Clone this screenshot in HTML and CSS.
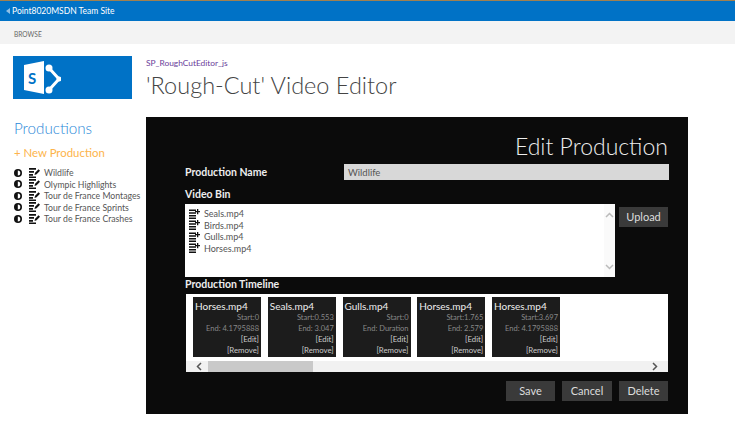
FILE: index.html
```html
<!DOCTYPE html>
<html lang="en">
<head>
    <meta charset="UTF-8">
    <title>Rough-Cut Video Editor</title>
    <link rel="stylesheet" href="styles.css">
</head>
<body>
    <svg class="defs" width="0" height="0">
        <symbol id="editIcon" viewBox="0 0 11 10">
            <path d="M0 0h7v1.700H0zM0 3h5v1.700H0zM0 6h4v1.700H0zM0 8.400h7V10H0z" fill="#111"/>
            <path d="M5.500 7l.6-2.200L9.500 1.200l1.500 1.500L7.600 6.300z" fill="#111"/>
        </symbol>
        <symbol id="addIcon" viewBox="0 0 11 10">
            <path d="M0 .5h7v1.500H0zM0 3.300h7v1.500H0zM0 6h7v1.500H0zM0 8.500h7V10H0z" fill="#111"/>
            <path d="M8 0h1.300v2H11v1.300H9.300v2H8v-2H6V2h2z" fill="#111"/>
        </symbol>
        <symbol id="playIcon" viewBox="0 0 8 8">
            <circle cx="4" cy="4" r="4" fill="#111"/>
            <path d="M3.800 1.500A2.500 2.500 0 0 1 3.800 6.500z" fill="#fff"/>
        </symbol>
    </svg>

    <div class="suite-bar">
        <span class="back-arrow"></span>
        <span>Point8020MSDN Team Site</span>
    </div>
    <div class="ribbon">BROWSE</div>

    <div class="title-row">
        <div class="logo">
            <svg width="37" height="33" viewBox="0 0 37 33">
                <path d="M0 4L20 0v33L0 29z" fill="#fff"/>
                <path d="M25 7L35 18 25 29" fill="none" stroke="#fff" stroke-width="3"/>
                <circle cx="25" cy="7" r="3.500" fill="#fff"/>
                <circle cx="35" cy="18" r="2.500" fill="#fff"/>
                <circle cx="25" cy="29" r="3.500" fill="#fff"/>
                <text x="4" y="23" class="logo-s">S</text>
            </svg>
        </div>
        <div class="title-text">
            <a class="crumb">SP_RoughCutEditor_js</a>
            <div class="page-title">'Rough-Cut' Video Editor</div>
        </div>
    </div>

    <div class="main">
        <div class="side">
            <div class="side-title">Productions</div>
            <div class="new-link">+ New Production</div>
            <ul class="prod-list">
                <li><svg class="play"><use href="#playIcon"/></svg><svg class="icon"><use href="#editIcon"/></svg>Wildlife</li>
                <li><svg class="play"><use href="#playIcon"/></svg><svg class="icon"><use href="#editIcon"/></svg>Olympic Highlights</li>
                <li><svg class="play"><use href="#playIcon"/></svg><svg class="icon"><use href="#editIcon"/></svg>Tour de France Montages</li>
                <li><svg class="play"><use href="#playIcon"/></svg><svg class="icon"><use href="#editIcon"/></svg>Tour de France Sprints</li>
                <li><svg class="play"><use href="#playIcon"/></svg><svg class="icon"><use href="#editIcon"/></svg>Tour de France Crashes</li>
            </ul>
        </div>

        <div class="panel">
            <div class="panel-title">Edit Production</div>
            <div class="name-row">
                <div class="label">Production Name</div>
                <div class="name-input">Wildlife</div>
            </div>
            <div class="label bin-label">Video Bin</div>
            <div class="bin-row">
                <div class="bin">
                    <ul class="bin-list">
                        <li><svg class="icon"><use href="#addIcon"/></svg>Seals.mp4</li>
                        <li><svg class="icon"><use href="#addIcon"/></svg>Birds.mp4</li>
                        <li><svg class="icon"><use href="#addIcon"/></svg>Gulls.mp4</li>
                        <li><svg class="icon"><use href="#addIcon"/></svg>Horses.mp4</li>
                    </ul>
                    <div class="vscroll">
                        <svg width="9" height="6" viewBox="0 0 9 6"><path d="M1 5l3.500-3.500L8 5" fill="none" stroke="#bbb" stroke-width="1.500"/></svg>
                        <svg width="9" height="6" viewBox="0 0 9 6"><path d="M1 1l3.500 3.500L8 1" fill="none" stroke="#bbb" stroke-width="1.500"/></svg>
                    </div>
                </div>
                <div class="btn upload">Upload</div>
            </div>
            <div class="label timeline-label">Production Timeline</div>
            <div class="timeline">
                <div class="clips">
                    <div class="clip">
                        <div class="clip-name">Horses.mp4</div>
                        <div class="clip-time">Start:0</div>
                        <div class="clip-time">End: 4.1795888</div>
                        <div class="clip-link">[Edit]</div>
                        <div class="clip-link">[Remove]</div>
                    </div>
                    <div class="clip">
                        <div class="clip-name">Seals.mp4</div>
                        <div class="clip-time">Start:0.553</div>
                        <div class="clip-time">End: 3.047</div>
                        <div class="clip-link">[Edit]</div>
                        <div class="clip-link">[Remove]</div>
                    </div>
                    <div class="clip">
                        <div class="clip-name">Gulls.mp4</div>
                        <div class="clip-time">Start:0</div>
                        <div class="clip-time">End: Duration</div>
                        <div class="clip-link">[Edit]</div>
                        <div class="clip-link">[Remove]</div>
                    </div>
                    <div class="clip">
                        <div class="clip-name">Horses.mp4</div>
                        <div class="clip-time">Start:1.765</div>
                        <div class="clip-time">End: 2.579</div>
                        <div class="clip-link">[Edit]</div>
                        <div class="clip-link">[Remove]</div>
                    </div>
                    <div class="clip">
                        <div class="clip-name">Horses.mp4</div>
                        <div class="clip-time">Start:3.697</div>
                        <div class="clip-time">End: 4.1795888</div>
                        <div class="clip-link">[Edit]</div>
                        <div class="clip-link">[Remove]</div>
                    </div>
                </div>
                <div class="hscroll">
                    <svg width="6" height="9" viewBox="0 0 6 9"><path d="M5 1L1.500 4.500 5 8" fill="none" stroke="#555" stroke-width="1.500"/></svg>
                    <div class="hthumb"></div>
                    <svg width="6" height="9" viewBox="0 0 6 9"><path d="M1 1l3.500 3.500L1 8" fill="none" stroke="#555" stroke-width="1.500"/></svg>
                </div>
            </div>
            <div class="actions">
                <div class="btn">Save</div>
                <div class="btn btn-wide">Cancel</div>
                <div class="btn">Delete</div>
            </div>
        </div>
    </div>
</body>
</html>
```

FILE: styles.css
```css
html, body {
    margin: 0;
    padding: 0;
}

body {
    width: 735px;
    height: 441px;
    overflow: hidden;
    background-color: #fff;
    font-family: Lato, "Open Sans", sans-serif;
    color: #444;
}

.defs {
    display: block;
    height: 0;
}

ul {
    list-style: none;
    margin: 0;
    padding: 0;
}

/* Top bars */
.suite-bar {
    display: flex;
    align-items: center;
    gap: 2px;
    height: 20px;
    padding-left: 6px;
    background-color: #0072c6;
    border-top: 1px solid #a08050;
    color: #fff;
    font-size: 8.500px;
}

.back-arrow {
    width: 0;
    height: 0;
    border-top: 3px solid transparent;
    border-bottom: 3px solid transparent;
    border-right: 4px solid #8fc0e6;
}

.ribbon {
    height: 23px;
    line-height: 27px;
    padding-left: 14px;
    background-color: #f3f3f3;
    color: #666;
    font-size: 6.600px;
}

/* Title */
.title-row {
    display: flex;
    height: 73px;
    padding: 12px 0 0 13px;
    box-sizing: border-box;
}

.logo {
    display: flex;
    align-items: center;
    width: 119px;
    height: 43px;
    padding-left: 11px;
    box-sizing: border-box;
    background-color: #0072c6;
}

.logo-s {
    font-size: 15px;
    font-weight: 700;
    fill: #0072c6;
}

.title-text {
    margin-left: 14px;
}

.crumb {
    display: block;
    margin-top: 1px;
    color: #6a3d9a;
    font-size: 8.400px;
    line-height: 12px;
}

.page-title {
    color: #444;
    font-size: 23.500px;
    font-weight: 300;
    line-height: 32px;
}

/* Main area */
.main {
    display: flex;
}

.side {
    width: 146px;
    padding-left: 14px;
    box-sizing: border-box;
}

.side-title {
    color: #2b88d8;
    font-size: 15.200px;
    font-weight: 300;
    line-height: 22px;
}

.new-link {
    margin-top: 6px;
    color: #fdb44b;
    font-size: 11.400px;
    line-height: 16px;
}

.prod-list {
    margin: 6px 0 0;
}

.prod-list li {
    display: flex;
    align-items: center;
    height: 11.500px;
    color: #555;
    font-size: 8.700px;
    white-space: nowrap;
}

.play {
    width: 8px;
    height: 8px;
    margin-right: 7px;
}

.icon {
    width: 11px;
    height: 10px;
    margin-right: 4px;
    flex-shrink: 0;
}

/* Edit panel */
.panel {
    width: 542px;
    height: 297px;
    padding: 0 20px 0 39px;
    box-sizing: border-box;
    background-color: #0b0b0b;
    color: #eee;
}

.panel-title {
    height: 47px;
    text-align: right;
    color: #eee;
    font-size: 23px;
    font-weight: 300;
    line-height: 59px;
}

.label {
    color: #eee;
    font-size: 10.500px;
    font-weight: 700;
    line-height: 16px;
}

.name-row {
    display: flex;
    justify-content: space-between;
    height: 16px;
    align-items: center;
}

.name-input {
    width: 325px;
    height: 16px;
    margin-right: -1px;
    padding-left: 4px;
    box-sizing: border-box;
    background-color: #d8d8d8;
    color: #555;
    font-size: 9.500px;
    line-height: 17px;
}

.bin-label {
    margin-top: 6px;
}

.bin-row {
    display: flex;
    align-items: flex-start;
    margin-top: 2px;
}

.bin {
    display: flex;
    justify-content: space-between;
    width: 430px;
    height: 73px;
    background-color: #fff;
}

.bin-list {
    padding: 4px 0 0 4px;
}

.bin-list li {
    display: flex;
    align-items: center;
    height: 11.500px;
    color: #555;
    font-size: 9px;
}

.vscroll {
    display: flex;
    flex-direction: column;
    justify-content: space-between;
    align-items: center;
    width: 11px;
    height: 58px;
    padding: 8px 0 7px;
    background-color: #fafafa;
}

.btn {
    width: 49px;
    height: 20px;
    background-color: #3a3a3a;
    color: #ddd;
    font-size: 11px;
    line-height: 20px;
    text-align: center;
}

.btn-wide {
    width: 50px;
}

.upload {
    margin: 3px 0 0 4px;
}

.timeline-label {
    margin-top: -1px;
}

.timeline {
    width: 482px;
    height: 78px;
    margin: 2px 0 0 1px;
    background-color: #fff;
}

.clips {
    display: flex;
    gap: 6.750px;
    height: 67px;
    padding: 3px 0 0 7px;
    box-sizing: border-box;
}

.clip {
    width: 68px;
    height: 60px;
    padding: 3px 2px 0;
    box-sizing: border-box;
    background-color: #1c1c1c;
    color: #ccc;
    text-align: right;
    font-size: 7.800px;
    line-height: 10.500px;
}

.clip-name {
    color: #eee;
    font-size: 10px;
    line-height: 13px;
    text-align: left;
}

.clip-time {
    color: #888;
    font-size: 7.500px;
}

.hscroll {
    display: flex;
    align-items: center;
    height: 11px;
    padding: 0 10px;
    background-color: #f1f1f1;
}

.hthumb {
    width: 105px;
    height: 100%;
    margin: 0 auto 0 6px;
    background-color: #c9c9c9;
}

.actions {
    display: flex;
    justify-content: flex-end;
    gap: 7px;
    margin-top: 9px;
}
```
